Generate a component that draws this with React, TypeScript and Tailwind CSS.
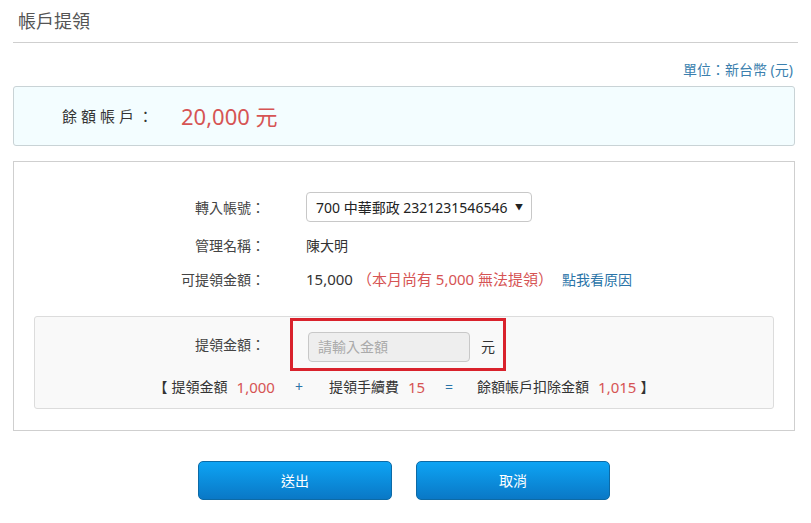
import React from "react";

const FONT = "font-['Noto_Sans','Noto_Sans_CJK_TC',sans-serif]";

const FormRow = ({ label, children }: { label: string; children: React.ReactNode }) => (
  <div className="flex items-center">
    <div className="w-[251px] text-right text-[14px] text-[#444]">{label}</div>
    <div className="ml-[41px] flex items-center text-[14px] text-[#333] whitespace-nowrap">{children}</div>
  </div>
);

const App = () => {
  return (
    <div className={`w-[811px] h-[523px] bg-white ${FONT}`}>
      {/* 標題 */}
      <div className="mx-[13px] h-[43px] border-b border-[#cfcfcf]">
        <h1 className="pl-[5px] pt-[8px] text-[18px] leading-[26px] text-[#555] font-normal">帳戶提領</h1>
      </div>

      <div className="px-[13px] pr-[16px]">
        <p className="mt-[18px] pr-[2px] text-right text-[14px] leading-[18px] text-[#3b7fae]">單位：新台幣 (元)</p>

        {/* 餘額 */}
        <div className="mt-[7px] h-[60px] flex items-center pl-[48px] border border-[#c9d3d6] rounded-[3px] bg-[#f3fdff]">
          <span className="text-[15px] tracking-[4px] text-[#333]">餘額帳戶：</span>
          <span className="ml-[24px] text-[22px] text-[#d65454]">20,000 元</span>
        </div>

        {/* 表單 */}
        <div className="mt-[15px] border border-[#cfcfcf] pt-[30px] pb-[21px]">
          <FormRow label="轉入帳號：">
            <div className="w-[226px] h-[30px] flex items-center justify-between pl-[9px] pr-[8px] border border-[#c8c8c8] rounded-[4px] bg-white text-[14px] text-[#222] whitespace-nowrap">
              <span>700 中華郵政 2321231546546</span>
              <span className="text-[8px]">▼</span>
            </div>
          </FormRow>
          <div className="mt-[13px]">
            <FormRow label="管理名稱：">
              <span className="leading-[20px]">陳大明</span>
            </FormRow>
          </div>
          <div className="mt-[12px]">
            <FormRow label="可提領金額：">
              <span className="text-[15px] leading-[20px]">15,000</span>
              <span className="ml-[4px] text-[15px] text-[#d65454]">（本月尚有 5,000 無法提領）</span>
              <span className="ml-[9px] text-[14px] text-[#2a74a8]">點我看原因</span>
            </FormRow>
          </div>

          {/* 提領金額 */}
          <div className="mt-[25px] mx-[20px] border border-[#dcdcdc] rounded-[3px] bg-[#f9f9f9] pt-[1px] pb-[11px]">
            <div className="flex items-center">
              <div className="w-[230px] text-right text-[14px] text-[#444]">提領金額：</div>
              <div className="ml-[25px] w-[216px] h-[53px] border-[3px] border-[#d9222c] flex items-start pt-[11px] pl-[15px]">
                <input
                  className="w-[162px] h-[30px] px-[9px] border border-[#c8c8c8] rounded-[4px] bg-[#eeeeee] text-[14px] placeholder:text-[#aaa] outline-none"
                  placeholder="請輸入金額"
                />
                <span className="ml-[11px] mt-[4px] text-[14px] text-[#333]">元</span>
              </div>
            </div>
            <div className="mt-[6px] flex justify-center items-center text-[14px] leading-[20px] text-[#333] whitespace-nowrap">
              <span>【</span>
              <span className="ml-[4px]">提領金額</span>
              <span className="ml-[9px] text-[15px] text-[#d65454]">1,000</span>
              <span className="ml-[20px] text-[#2a74a8]">+</span>
              <span className="ml-[26px]">提領手續費</span>
              <span className="ml-[9px] text-[15px] text-[#d65454]">15</span>
              <span className="ml-[20px] text-[#2a74a8]">=</span>
              <span className="ml-[24px]">餘額帳戶扣除金額</span>
              <span className="ml-[9px] text-[15px] text-[#d65454]">1,015</span>
              <span className="ml-[4px]">】</span>
            </div>
          </div>
        </div>

        {/* 按鈕 */}
        <div className="mt-[30px] flex justify-center gap-[24px]">
          <button className="w-[194px] h-[39px] rounded-[5px] border border-[#0c6aa6] bg-gradient-to-b from-[#0ea4f4] to-[#0a78c6] text-white text-[14px]">
            送出
          </button>
          <button className="w-[194px] h-[39px] rounded-[5px] border border-[#0c6aa6] bg-gradient-to-b from-[#0ea4f4] to-[#0a78c6] text-white text-[14px]">
            取消
          </button>
        </div>
      </div>
    </div>
  );
};

export default App;
